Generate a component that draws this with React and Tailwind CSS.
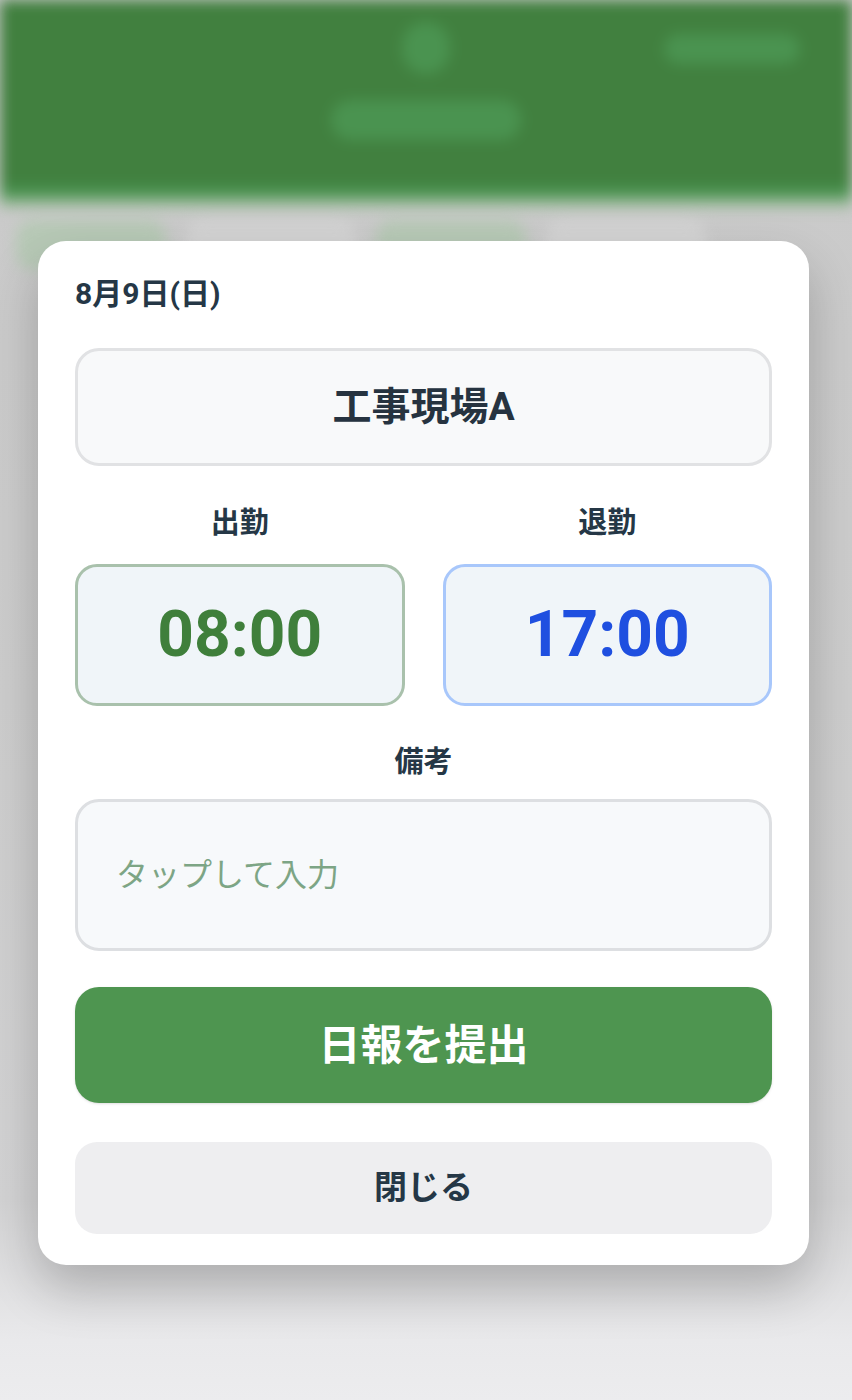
import React from 'react';

const font = { fontFamily: 'Roboto, "Noto Sans CJK JP", "Noto Sans", sans-serif' };

// blurred app page lying behind the modal
const BackgroundApp = () => (
  <div className="h-[1400px] w-full bg-[linear-gradient(to_bottom,#c9c9c9_0px,#cdcdcd_700px,#d3d3d4_1200px,#e9e9eb_1340px,#ececee_1400px)]">
    <div className="blur-[7px]">
      <div className="h-[186px] bg-[#41803f] flex flex-col items-center pt-[22px] relative">
        <div className="w-[48px] h-[52px] rounded-full bg-[#4a9350]" />
        <div className="mt-[26px] w-[190px] h-[40px] rounded-full bg-[#4a9350]" />
        <div className="absolute right-[52px] top-[34px] w-[136px] h-[30px] rounded-full bg-[#4a9350]" />
      </div>
      <div className="h-[12px] bg-[#4a9350]" />
      <div className="h-[10px] bg-[#9dba9c]" />
      <div className="flex gap-5 px-4 pt-3">
        <div className="h-[50px] w-[150px] rounded-2xl bg-[#b7c9b6]" />
        <div className="h-[50px] w-[170px] rounded-2xl bg-[#d3d3d3]" />
        <div className="h-[50px] w-[150px] rounded-2xl bg-[#b7c9b6]" />
        <div className="h-[50px] w-[160px] rounded-2xl bg-[#d3d3d3]" />
      </div>
    </div>
  </div>
);

export default function App() {
  return (
    <div className="relative h-[1400px] w-full overflow-hidden" style={font}>
      <BackgroundApp />
      <div className="absolute inset-0 flex justify-center pt-[241px]">
        <div className="w-[771px] h-[1024px] ml-[-5px] bg-white rounded-[28px] shadow-[0_24px_50px_rgba(0,0,0,0.22)] px-[37px] pt-[36px] pb-[31px] flex flex-col">
          <div className="text-[30px] font-bold text-[#253746] leading-[34px]">8月9日(日)</div>

          <div className="mt-[37px] h-[118px] rounded-[24px] border-[3px] border-[#e1e2e4] bg-[#f8f9fa] flex items-center justify-center">
            <span className="text-[39px] font-bold text-[#263340]">工事現場A</span>
          </div>

          <div className="mt-[39px] grid grid-cols-2 gap-[38px]">
            <div className="flex flex-col items-center">
              <div className="text-[29px] font-bold text-[#253746] leading-[36px]">出勤</div>
              <div className="mt-[23px] w-full h-[142px] rounded-[22px] border-[3px] border-[#a9c1ac] bg-[#f0f5f9] flex items-center justify-center">
                <span className="text-[64px] font-bold text-[#3f7f3b]">08:00</span>
              </div>
            </div>
            <div className="flex flex-col items-center">
              <div className="text-[29px] font-bold text-[#253746] leading-[36px]">退勤</div>
              <div className="mt-[23px] w-full h-[142px] rounded-[22px] border-[3px] border-[#a8c7fb] bg-[#f0f5f9] flex items-center justify-center">
                <span className="text-[64px] font-bold text-[#1f4fe0]">17:00</span>
              </div>
            </div>
          </div>

          <div className="mt-[38px] text-center text-[29px] font-bold text-[#253746] leading-[36px]">備考</div>
          <div className="mt-[19px] h-[153px] rounded-[24px] border-[3px] border-[#dddfe2] bg-[#f7f9fb] flex items-center px-[38px]">
            <span className="text-[32px] text-[#7da585]">タップして入力</span>
          </div>

          <button className="mt-[36px] h-[116px] rounded-[24px] bg-[#4e9550] text-white text-[42px] font-bold shadow-sm">
            日報を提出
          </button>

          <button className="mt-[39px] h-[92px] rounded-[22px] bg-[#eeeef0] text-[#253746] text-[33px] font-bold">
            閉じる
          </button>
        </div>
      </div>
    </div>
  );
}
